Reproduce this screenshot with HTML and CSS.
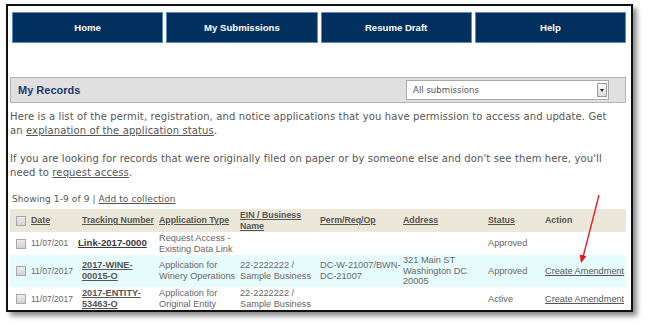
FILE: index.html
```html
<!DOCTYPE html>
<html>
<head>
<meta charset="utf-8">
<link rel="stylesheet" href="styles.css">
</head>
<body>
<div class="frame">
  <nav class="nav">
    <div class="tab">Home</div>
    <div class="tab">My Submissions</div>
    <div class="tab">Resume Draft</div>
    <div class="tab">Help</div>
  </nav>
  <div class="bar">
    <h2 class="bar-title">My Records</h2>
    <div class="select"><span class="select-text">All submissions</span><span class="select-btn"><span class="tri"></span></span></div>
  </div>
  <p class="para">Here is a list of the permit, registration, and notice applications that you have permission to access and update. Get an <a href="#">explanation of the application status</a>.</p>
  <p class="para">If you are looking for records that were originally filed on paper or by someone else and don't see them here, you'll need to <a href="#">request access</a>.</p>
  <div class="showing">Showing 1-9 of 9 | <a href="#">Add to collection</a></div>
  <table class="records">
    <colgroup>
      <col class="c-chk"><col class="c-date"><col class="c-track"><col class="c-type"><col class="c-ein"><col class="c-perm"><col class="c-addr"><col class="c-status"><col class="c-action">
    </colgroup>
    <thead>
      <tr class="head">
        <th class="chk"><span class="cb"></span></th>
        <th><a href="#">Date</a></th>
        <th><a href="#">Tracking Number</a></th>
        <th><a href="#">Application Type</a></th>
        <th class="wrap"><a href="#">EIN / Business Name</a></th>
        <th><a href="#">Perm/Req/Op</a></th>
        <th><a href="#">Address</a></th>
        <th><a href="#">Status</a></th>
        <th class="plain">Action</th>
      </tr>
    </thead>
    <tbody>
      <tr class="r1">
        <td class="chk"><span class="cb"></span></td>
        <td class="date"><span class="cut">11/07/2017</span></td>
        <td><a href="#" class="link-big">Link-2017-0000</a></td>
        <td>Request Access -<br>Existing Data Link</td>
        <td></td>
        <td></td>
        <td></td>
        <td>Approved</td>
        <td></td>
      </tr>
      <tr class="r2 alt">
        <td class="chk"><span class="cb"></span></td>
        <td class="date">11/07/2017</td>
        <td><a href="#" class="track">2017-WINE-<br>00015-O</a></td>
        <td>Application for<br>Winery Operations</td>
        <td>22-2222222 /<br>Sample Business</td>
        <td>DC-W-21007/BWN-<br>DC-21007</td>
        <td>321 Main ST<br>Washington DC<br>20005</td>
        <td>Approved</td>
        <td><a href="#" class="act">Create Amendment</a></td>
      </tr>
      <tr class="r3">
        <td class="chk"><span class="cb"></span></td>
        <td class="date">11/07/2017</td>
        <td><a href="#" class="track">2017-ENTITY-<br>53463-O</a></td>
        <td>Application for<br>Original Entity</td>
        <td>22-2222222 /<br>Sample Business</td>
        <td></td>
        <td></td>
        <td>Active</td>
        <td><a href="#" class="act">Create Amendment</a></td>
      </tr>
    </tbody>
  </table>
</div>
<svg class="arrow" width="647" height="329" viewBox="0 0 647 329">
  <line x1="599" y1="195" x2="583.3" y2="256" stroke="#e8141b" stroke-width="1.3"/>
  <polygon points="581,263 586.4,256.2 579.7,254.4" fill="#e8141b"/>
</svg>
</body>
</html>
```
FILE: styles.css
```css
html, body {
  margin: 0;
  padding: 0;
  background: #fff;
}
body {
  position: relative;
  width: 647px;
  height: 329px;
  overflow: hidden;
}
.frame {
  margin: 4px 0 0 6px;
  width: 627px;
  height: 308px;
  box-sizing: border-box;
  border: 2px solid #111;
  box-shadow: 4px 4px 5px rgba(0,0,0,0.45);
  overflow: hidden;
  padding: 6px 0 0 2px;
  background: #fff;
}
.nav {
  display: flex;
  gap: 3px;
  margin-left: 2px;
  width: 614px;
  height: 31px;
}
.tab {
  flex: 1;
  background: #01305f;
  border: 1px solid #5f8cba;
  color: #fff;
  font-family: "Liberation Sans", Arial, sans-serif;
  font-weight: bold;
  font-size: 9.6px;
  display: flex;
  align-items: center;
  justify-content: center;
}
.bar {
  margin-top: 34px;
  width: 616px;
  height: 26px;
  box-sizing: border-box;
  background: #e0e0e0;
  border: 1px solid #b4b4b4;
  display: flex;
  align-items: center;
  justify-content: space-between;
  padding: 0 16px 0 7px;
}
.bar-title {
  margin: 0;
  font-family: "Liberation Sans", Arial, sans-serif;
  font-weight: bold;
  font-size: 11px;
  color: #1c3b68;
}
.select {
  width: 203px;
  height: 20px;
  box-sizing: border-box;
  background: #fff;
  border: 1px solid #a9a9a9;
  display: flex;
  align-items: center;
  justify-content: space-between;
  padding: 0 1px 0 6px;
}
.select-text {
  font-family: "DejaVu Sans", Verdana, sans-serif;
  font-size: 8.6px;
  color: #555;
}
.select-btn {
  width: 10px;
  height: 14px;
  box-sizing: border-box;
  border: 1px solid #9a9a9a;
  background: linear-gradient(#fafafa, #dcdcdc);
  display: flex;
  align-items: center;
  justify-content: center;
}
.tri {
  width: 0;
  height: 0;
  border-left: 2.5px solid transparent;
  border-right: 2.5px solid transparent;
  border-top: 3px solid #222;
}
.para {
  margin: 7px 0 14px 0;
  font-family: "DejaVu Sans", Verdana, sans-serif;
  font-size: 10px;
  letter-spacing: 0.12px;
  line-height: 14px;
  color: #555;
  width: 608px;
}
.para + .para {
  margin-top: 0;
}
.para a, .showing a {
  color: #555;
  text-decoration: underline;
}
.showing {
  margin: -1px 0 4px 2px;
  font-family: "DejaVu Sans", Verdana, sans-serif;
  font-size: 9px;
  letter-spacing: 0.1px;
  line-height: 12px;
  color: #555;
}
.records {
  width: 616px;
  border-collapse: collapse;
  table-layout: fixed;
  font-family: "Liberation Sans", Arial, sans-serif;
  font-size: 9.2px;
  color: #666;
}
.c-chk { width: 18px; }
.c-date { width: 51px; }
.c-track { width: 77px; }
.c-type { width: 81px; }
.c-ein { width: 80px; }
.c-perm { width: 83px; }
.c-addr { width: 85px; }
.c-status { width: 57px; }
.c-action { width: 84px; }
.records th, .records td {
  padding: 0 0 0 3px;
  text-align: left;
  vertical-align: middle;
  line-height: 10.6px;
  white-space: nowrap;
}
.records th.chk, .records td.chk {
  padding-left: 6px;
}
.records td.date {
  font-size: 8.5px;
}
.head {
  background: #ebe8d9;
  height: 23px;
}
.records th {
  font-weight: bold;
  font-size: 8.8px;
}
.records th.wrap {
  white-space: normal;
}
.records th a {
  color: #555;
  text-decoration: underline;
}
.records th.plain {
  color: #555;
}
.r1 { height: 23px; }
.r2 { height: 32px; }
.r3 { height: 24px; }
.alt { background: #e6fcfc; }
.cb {
  display: block;
  width: 10px;
  height: 10px;
  box-sizing: border-box;
  border: 1px solid #a8a8a8;
  background: linear-gradient(#ececec, #d2d2d2);
}
.cut {
  display: inline-block;
  width: 38px;
  overflow: hidden;
  vertical-align: middle;
}
.link-big {
  display: inline-block;
  margin-left: -4px;
  font-weight: bold;
  font-size: 9.6px;
  color: #3a3a3a;
  text-decoration: underline;
}
.track {
  font-weight: bold;
  color: #555;
  text-decoration: underline;
}
.act {
  color: #555;
  text-decoration: underline;
}
.arrow {
  position: absolute;
  left: 0;
  top: 0;
  pointer-events: none;
}
```
